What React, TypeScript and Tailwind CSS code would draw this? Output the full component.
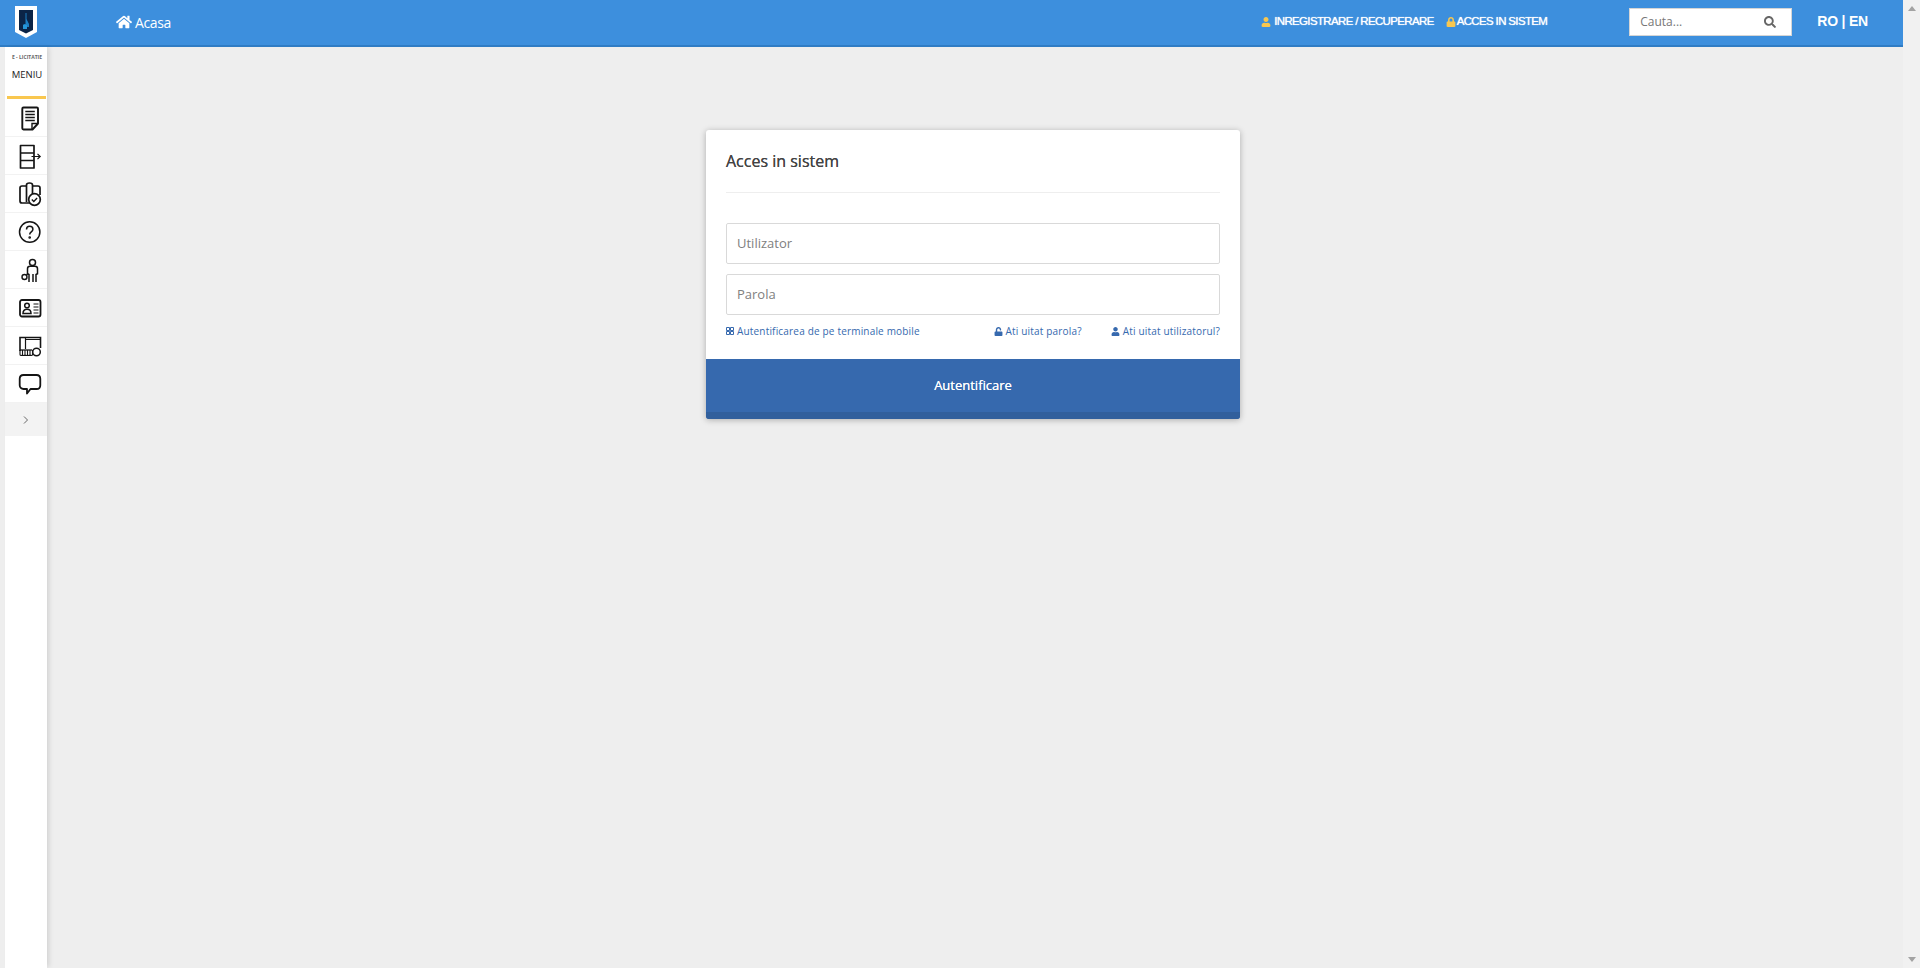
import { FC, ReactNode } from 'react';
import { FaHome, FaLock, FaSearch, FaUnlock, FaUser } from 'react-icons/fa';

const openSans = 'font-["Open_Sans",sans-serif]';

const MenuSvg: FC<{ children: ReactNode }> = ({ children }) => (
  <svg width="24" height="26" viewBox="0 0 24 26" fill="none" stroke="#151515" strokeWidth="1.7">
    {children}
  </svg>
);

const IconDocument = () => (
  <MenuSvg>
    <path d="M5.500 2.500c-.8 0-1.200.4-1.200 1.200v19.600c0 .8.4 1.200 1.200 1.200h9l5.500-6V3.700c0-.8-.4-1.200-1.200-1.200z" strokeWidth="1.900" strokeLinejoin="round" />
    <path d="M7.300 6.500h9.500M7.300 9.500h9.500M7.300 12.500h9.500M7.300 15.500h9.500" strokeWidth="1.500" />
    <path d="M14 24v-5.500h5.500" strokeWidth="1.400" />
  </MenuSvg>
);

const IconExport = () => (
  <MenuSvg>
    <path d="M2.500 2.500h13.500v7.500H2.500zM2.500 10h13.500v7.500H2.500zM2.500 17.500h13.500V25H2.500z" strokeLinejoin="round" />
    <path d="M13.500 13.500h8.500M19.500 10.800l2.700 2.700-2.700 2.700" strokeWidth="1.200" />
  </MenuSvg>
);

const IconClipboardCheck = () => (
  <MenuSvg>
    <path d="M8.500 5H4C2.800 5 2 5.800 2 7v13c0 1.200.8 2 2 2h8" />
    <path d="M14.500 5H20c1.200 0 2 .8 2 2v7" />
    <path d="M8.500 21V4c0-1.200 1-2 3-2s3 .8 3 2v9" />
    <circle cx="16.500" cy="18.500" r="5.800" fill="#fff" />
    <path d="M13.800 18.500l2 2 3.300-3.500" strokeWidth="1.400" />
  </MenuSvg>
);

const IconQuestion = () => (
  <MenuSvg>
    <circle cx="11.700" cy="13" r="10.200" strokeWidth="1.500" />
    <path d="M8.500 10.500c0-2 1.400-3.200 3.200-3.200s3.200 1.200 3.200 3c0 2.700-3.200 2.500-3.200 5.200" strokeWidth="1.500" />
    <circle cx="11.700" cy="18.500" r="0.500" fill="#151515" />
  </MenuSvg>
);

const IconPersonSearch = () => (
  <MenuSvg>
    <circle cx="14.500" cy="5.500" r="3" strokeWidth="1.500" />
    <path d="M11 25v-7.500l-1.500-.8v-5c0-1.500 1-2.500 2.500-2.500h5c1.500 0 2.500 1 2.500 2.500v5l-1.500.8V25M15 17v8" strokeWidth="1.500" />
    <circle cx="6.500" cy="20" r="2.500" strokeWidth="1.400" />
    <path d="M8.500 18l1.500-1.500" strokeWidth="1.400" />
  </MenuSvg>
);

const IconIdCard = () => (
  <MenuSvg>
    <rect x="2" y="5" width="20.500" height="16.500" rx="2" strokeWidth="1.800" />
    <circle cx="9" cy="10.500" r="2.300" strokeWidth="1.500" />
    <path d="M5 18.500c0-2.800 1.500-4.200 4-4.200s4 1.400 4 4.200z" strokeWidth="1.500" />
    <path d="M15.500 9h5M15.500 12h5M15.500 15h5M15.500 18h5" strokeWidth="1.200" />
  </MenuSvg>
);

const IconAwning = () => (
  <MenuSvg>
    <path d="M2 18V4.500h20.500V15" strokeWidth="1.600" />
    <path d="M7.500 4.500V16M7.500 6.500h15" strokeWidth="1.200" />
    <path d="M2 17h12" strokeWidth="1.300" />
    <path d="M2 17v4.500c0 1.300 2.500 1.300 2.500 0V17M4.500 17v4.500c0 1.300 2.500 1.300 2.500 0V17M7 17v4.500c0 1.300 2.500 1.300 2.500 0V17M9.500 17v4.500c0 1.300 2.500 1.300 2.500 0V17M12 17v4.500c0 1.300 2.500 1.300 2.500 0V17" strokeWidth="1.100" />
    <circle cx="18.500" cy="19" r="3.800" fill="#fff" strokeWidth="1.500" />
  </MenuSvg>
);

const IconChat = () => (
  <MenuSvg>
    <path d="M5.500 4h13c2.200 0 3.800 1.600 3.800 3.800v6.400c0 2.200-1.600 3.800-3.800 3.800h-6l-3.500 4.500V18H5.500c-2.200 0-3.800-1.600-3.800-3.800V7.800C1.700 5.600 3.300 4 5.500 4z" strokeWidth="1.800" strokeLinejoin="round" />
  </MenuSvg>
);

const IconLogo = () => (
  <svg width="22" height="32" viewBox="0 0 22 32">
    <path d="M0 0h22v26l-11 6-11-6z" fill="#fff" />
    <path d="M4 4h14v20l-7 3.500L4 24z" fill="#0b2447" />
    <path d="M10.500 7h1v6l2.500 5v3H8.500v-3h2z" fill="#1d7fc4" />
    <rect x="8" y="19" width="4" height="4" fill="#2596d8" />
  </svg>
);

const IconQr = () => (
  <svg width="8" height="8" viewBox="0 0 8 8" fill="none" stroke="#3669ae" strokeWidth="1">
    <path d="M.5.500h3v3h-3zM4.500.500h3v3h-3zM.5 4.500h3v3h-3zM4.500 4.500h3v3h-3z" />
  </svg>
);

const menuItems: ReactNode[] = [
  <IconDocument key="document" />,
  <IconExport key="export" />,
  <IconClipboardCheck key="clipboard" />,
  <IconQuestion key="question" />,
  <IconPersonSearch key="person" />,
  <IconIdCard key="card" />,
  <IconAwning key="awning" />,
  <IconChat key="chat" />,
];

const FormLink: FC<{ icon: ReactNode; label: string }> = ({ icon, label }) => (
  <a className="flex items-center gap-[3px] text-[10px] leading-4 tracking-[0.18px] text-[#3669ae]">
    {icon}
    {label}
  </a>
);

const App = () => {
  return (
    <div className={`flex h-[968px] w-[1920px] overflow-hidden bg-[#eeeeee] ${openSans}`}>
      <div className="flex w-[1903px] flex-col">
        {/* header */}
        <header className="flex h-[47px] shrink-0 items-center border-b-2 border-[#2f7cc4] bg-[#3d8fdd] pb-0.5 pl-[15px] text-white">
          <IconLogo />
          <a className="ml-[79px] flex items-center gap-[3px] text-[14px] font-medium tracking-[-0.4px]">
            <FaHome className="text-[16px]" />
            <span className="pt-0.5">Acasa</span>
          </a>
          <div className="ml-auto flex items-center font-['Liberation_Sans',sans-serif] text-[11.5px] tracking-[-0.65px] [text-shadow:0_0_1px_#fff]">
            <FaUser className="mr-[3px] text-[10px] text-[#f9c74f]" />
            INREGISTRARE / RECUPERARE
            <FaLock className="ml-3 mr-[1px] text-[10px] text-[#f9c74f]" />
            ACCES IN SISTEM
          </div>
          <div className="ml-[82px] flex h-7 w-[163px] items-center justify-between border border-[#d5d5d5] bg-white pl-[10px] pr-[15px] text-[12px] text-[#777]">
            <span>Cauta...</span>
            <FaSearch className="text-[12px] text-[#666]" />
          </div>
          <div className="ml-[25px] mr-[35px] font-['Liberation_Sans',sans-serif] text-[14px] font-bold tracking-[-0.2px]">
            RO | EN
          </div>
        </header>
        <div className="flex min-h-0 flex-1 pl-[5px]">
          {/* sidebar */}
          <aside className="flex w-[42px] shrink-0 flex-col bg-white shadow-[3px_0_5px_-1px_rgba(0,0,0,0.12)]">
            <div className="flex h-[49px] flex-col items-center pl-0.5">
              <span className="mt-1.5 text-[5px] font-bold leading-2 text-[#666]">E - LICITATIE</span>
              <span className="mt-2 text-[9.5px] font-medium leading-3 text-[#222]">MENIU</span>
            </div>
            <div className="ml-0.5 mr-px h-[3px] bg-[#f9c74f]" />
            {menuItems.map((item, index) => (
              <div
                key={index}
                className="flex h-[38px] items-center justify-center border-b border-[#f2f2f2] pl-[7px]"
              >
                {item}
              </div>
            ))}
            <div className="flex h-[33px] items-center justify-center bg-[#f3f3f3]">
              <svg width="6" height="8" viewBox="0 0 6 8" fill="none" stroke="#666" strokeWidth="1">
                <path d="M1 .5L4.500 4 1 7.500" />
              </svg>
            </div>
          </aside>
          {/* main */}
          <main className="ml-[659px] pt-[83px]">
            <div className="w-[534px] overflow-hidden rounded-[3px] bg-white shadow-[0_1px_6px_rgba(0,0,0,0.28)]">
              <div className="px-5">
                <h3 className="flex h-[63px] items-center border-b border-[#eeeeee] text-[16px] font-medium text-[#444] [text-shadow:0_0_0.5px_#444]">
                  Acces in sistem
                </h3>
                <input
                  className="mt-[30px] block h-[41px] w-full rounded-[2px] border border-[#d9d9d9] px-2.5 pb-0.5 text-[13px] outline-none placeholder:text-[#808080]"
                  placeholder="Utilizator"
                />
                <input
                  className="mt-[10px] block h-[41px] w-full rounded-[2px] border border-[#d9d9d9] px-2.5 pb-0.5 text-[13px] outline-none placeholder:text-[#808080]"
                  placeholder="Parola"
                />
                <div className="flex h-[44px] items-start justify-between pt-2">
                  <FormLink icon={<IconQr />} label="Autentificarea de pe terminale mobile" />
                  <div className="flex gap-[29px]">
                    <FormLink icon={<FaUnlock className="text-[9px]" />} label="Ati uitat parola?" />
                    <FormLink icon={<FaUser className="text-[9px]" />} label="Ati uitat utilizatorul?" />
                  </div>
                </div>
              </div>
              <button className="block h-[60px] w-full border-b-[7px] border-[#315f9c] bg-[#3669ae] text-[13px] font-medium text-white [text-shadow:0_0_0.5px_#fff]">
                Autentificare
              </button>
            </div>
          </main>
        </div>
      </div>
      {/* scrollbar */}
      <div className="flex w-[17px] shrink-0 flex-col items-center justify-between bg-[#f1f1f1] py-[6px]">
        <span className="border-x-[4px] border-b-[5px] border-x-transparent border-b-[#a3a3a3]" />
        <span className="border-x-[4px] border-t-[5px] border-x-transparent border-t-[#a3a3a3]" />
      </div>
    </div>
  );
};

export default App;
